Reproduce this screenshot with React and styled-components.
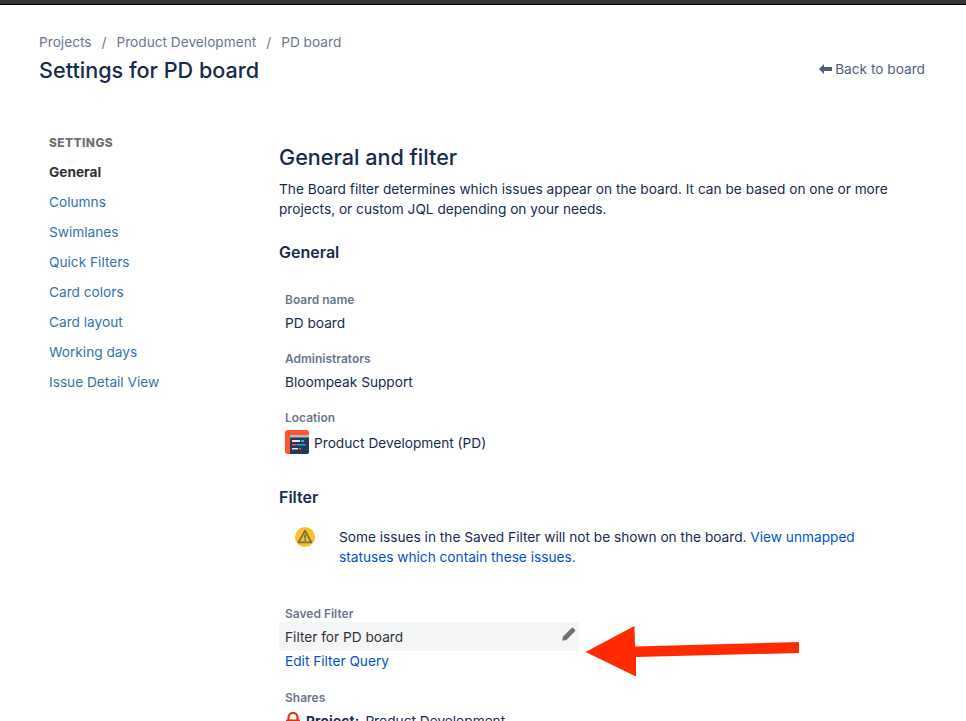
import React from 'react'
import styled, { createGlobalStyle } from 'styled-components'

const GlobalStyle = createGlobalStyle`
  html, body {
    margin: 0;
    padding: 0;
    background: #fff;
    font-family: Inter, "Liberation Sans", sans-serif;
    height: 721px;
    overflow: hidden;
  }
`

const TopStrip = styled.div`
  height: 4px;
  background: #333;
  border-bottom: 1px solid #000;
`

const Page = styled.div`
  padding: 28px 41px 0 39px;
`

const Header = styled.div`
  display: flex;
  justify-content: space-between;
  align-items: flex-end;
`

const Crumbs = styled.div`
  display: flex;
  gap: 10px;
  font-size: 13.68px;
  line-height: 18px;
  color: #6b778c;
`

const Title = styled.h1`
  margin: 4px 0 0;
  font-size: 21.6px;
  line-height: 30px;
  font-weight: 500;
  color: #172b4d;
`

const BackLink = styled.a`
  display: flex;
  align-items: center;
  gap: 3px;
  font-size: 13.68px;
  line-height: 20px;
  color: #505f79;
  margin-bottom: 6px;
`

const Body = styled.div`
  display: flex;
  margin-top: 47px;
`

const Sidebar = styled.nav`
  width: 240px;
  padding: 3px 0 0 10px;
  box-sizing: border-box;
`

const SideHeading = styled.div`
  font-size: 11.9px;
  font-weight: 800;
  line-height: 16px;
  letter-spacing: 0.45px;
  color: #707070;
  margin-bottom: 6px;
`

const SideItem = styled.div`
  font-size: 13.68px;
  line-height: 30px;
  font-weight: ${p => (p.$active ? 700 : 400)};
  color: ${p => (p.$active ? '#333' : '#3572b0')};
`

const Main = styled.main`
  flex: 1;
`

const PageHeading = styled.h2`
  margin: 10px 0 0;
  font-size: 21.6px;
  line-height: 30px;
  font-weight: 500;
  color: #172b4d;
`

const Intro = styled.p`
  margin: 7px 0 0;
  font-size: 13.68px;
  line-height: 20px;
  color: #172b4d;
`

const Section = styled.h3`
  margin: ${p => p.$top}px 0 0;
  font-size: 16px;
  line-height: 22px;
  font-weight: 600;
  color: #172b4d;
`

const Field = styled.div`
  margin: ${p => p.$top}px 0 0 6px;
`

const Label = styled.div`
  font-size: 12px;
  line-height: 16px;
  font-weight: 600;
  color: #6b778c;
`

const Value = styled.div`
  display: flex;
  align-items: center;
  gap: 5px;
  margin-top: 5px;
  font-size: 13.68px;
  line-height: 20px;
  color: #172b4d;
`

const Warning = styled.div`
  display: flex;
  margin: 19px 0 0 16px;
  width: 570px;
`

const WarningIcon = styled.div`
  width: 44px;
  flex-shrink: 0;
`

const WarningText = styled.div`
  font-size: 13.68px;
  line-height: 20px;
  color: #172b4d;
`

const TextLink = styled.a`
  color: #0052cc;
`

const EditRow = styled.div`
  display: flex;
  justify-content: space-between;
  width: 300px;
  height: 29px;
  margin: 0 0 0 -6px;
  padding: 5px 3px 0 6px;
  box-sizing: border-box;
  background: #f4f5f7;
  font-size: 13.68px;
  line-height: 20px;
  color: #333;
`

const LinkRow = styled.div`
  font-size: 13.68px;
  line-height: 20px;
`

const ShareRow = styled.div`
  display: flex;
  align-items: center;
  gap: 5px;
  margin-top: 5px;
  font-size: 13.68px;
  line-height: 20px;
  color: #172b4d;
`

const Strong = styled.b`
  font-weight: 700;
  letter-spacing: 0.2px;
  margin-right: 2px;
`

const ProjectSvg = styled.svg`
  transform: translateY(-1px);
`

const Annotation = styled.svg`
  position: absolute;
  left: 580px;
  top: 620px;
`

const ArrowBack = () => (
  <svg width="13" height="10" viewBox="0 0 13 10">
    <path d="M0 5 L5 0 V3 H13 V7 H5 V10 Z" fill="#505f79" />
  </svg>
)

const ProjectIcon = () => (
  <ProjectSvg width="24" height="24" viewBox="0 0 24 24">
    <rect width="24" height="24" rx="3" fill="#ff5630" />
    <path d="M5 5 H24 V22 a2 2 0 0 1 -2 2 H5 Z" fill="#253858" />
    <rect x="5" y="5" width="19" height="2.5" fill="#b3bac5" />
    <rect x="7" y="10" width="8" height="2" fill="#deebff" />
    <rect x="16" y="10" width="3" height="2" fill="#4c9aff" />
    <rect x="7" y="14" width="4" height="1.5" fill="#ff5630" />
    <rect x="11.5" y="14" width="9" height="1.5" fill="#00b8d9" />
    <rect x="7" y="18" width="6" height="1.5" fill="#deebff" />
    <rect x="14" y="18" width="2" height="1.5" fill="#ff5630" />
  </ProjectSvg>
)

const WarnIcon = () => (
  <svg width="20" height="20" viewBox="0 0 20 20">
    <circle cx="10" cy="10" r="10" fill="#f6c02d" />
    <path d="M10 3.8 L16.4 15.4 H3.6 Z" fill="none" stroke="#7a6f48" strokeWidth="1.8" strokeLinejoin="round" />
    <rect x="9.1" y="7.6" width="1.8" height="4" fill="#7a6f48" />
    <rect x="9.1" y="12.4" width="1.8" height="1.6" fill="#7a6f48" />
  </svg>
)

const PencilIcon = () => (
  <svg width="14" height="14" viewBox="0 0 14 14">
    <path d="M0.3 13.7 L1 9.6 L9.4 1.2 C10 0.6 10.9 0.6 11.5 1.2 L12.8 2.5 C13.4 3.1 13.4 4 12.8 4.6 L4.4 13 Z" fill="#707070" />
  </svg>
)

const LockIcon = () => (
  <svg width="16" height="18" viewBox="0 0 16 18">
    <path d="M3.5 8 V5.5 a4.5 4.5 0 0 1 9 0 V8" fill="none" stroke="#de350b" strokeWidth="2.2" />
    <rect x="1" y="7.5" width="14" height="10.5" rx="1" fill="#de350b" />
  </svg>
)

const App = () => {
  const items = ['Columns', 'Swimlanes', 'Quick Filters', 'Card colors', 'Card layout', 'Working days', 'Issue Detail View']
  return (
    <>
      <GlobalStyle />
      <TopStrip />
      <Page>
        <Header>
          <div>
            <Crumbs>
              <span>Projects</span><span>/</span>
              <span>Product Development</span><span>/</span>
              <span>PD board</span>
            </Crumbs>
            <Title>Settings for PD board</Title>
          </div>
          <BackLink><ArrowBack />Back to board</BackLink>
        </Header>
        <Body>
          <Sidebar>
            <SideHeading>SETTINGS</SideHeading>
            <SideItem $active>General</SideItem>
            {items.map(i => <SideItem key={i}>{i}</SideItem>)}
          </Sidebar>
          <Main>
            <PageHeading>General and filter</PageHeading>
            <Intro>The Board filter determines which issues appear on the board. It can be based on one or more projects, or custom JQL depending on your needs.</Intro>
            <Section $top={22}>General</Section>
            <Field $top={29}>
              <Label>Board name</Label>
              <Value>PD board</Value>
            </Field>
            <Field $top={18}>
              <Label>Administrators</Label>
              <Value>Bloompeak Support</Value>
            </Field>
            <Field $top={18}>
              <Label>Location</Label>
              <Value><ProjectIcon />Product Development (PD)</Value>
            </Field>
            <Section $top={31}>Filter</Section>
            <Warning>
              <WarningIcon><WarnIcon /></WarningIcon>
              <WarningText>
                Some issues in the Saved Filter will not be shown on the board. <TextLink>View unmapped statuses which contain these issues.</TextLink>
              </WarningText>
            </Warning>
            <Field $top={39}>
              <Label>Saved Filter</Label>
              <EditRow>Filter for PD board<PencilIcon /></EditRow>
              <LinkRow><TextLink>Edit Filter Query</TextLink></LinkRow>
            </Field>
            <Field $top={19}>
              <Label>Shares</Label>
              <ShareRow><LockIcon /><span><Strong>Project:</Strong> Product Development</span></ShareRow>
            </Field>
          </Main>
        </Body>
      </Page>
      <Annotation width="225" height="60" viewBox="0 0 225 60">
        <path d="M5.5 32 L54.5 6 L55 26.5 L219 22 L219 33 L56 37 L56 56.5 Z" fill="#ff2a00" />
      </Annotation>
    </>
  )
}

export default App
